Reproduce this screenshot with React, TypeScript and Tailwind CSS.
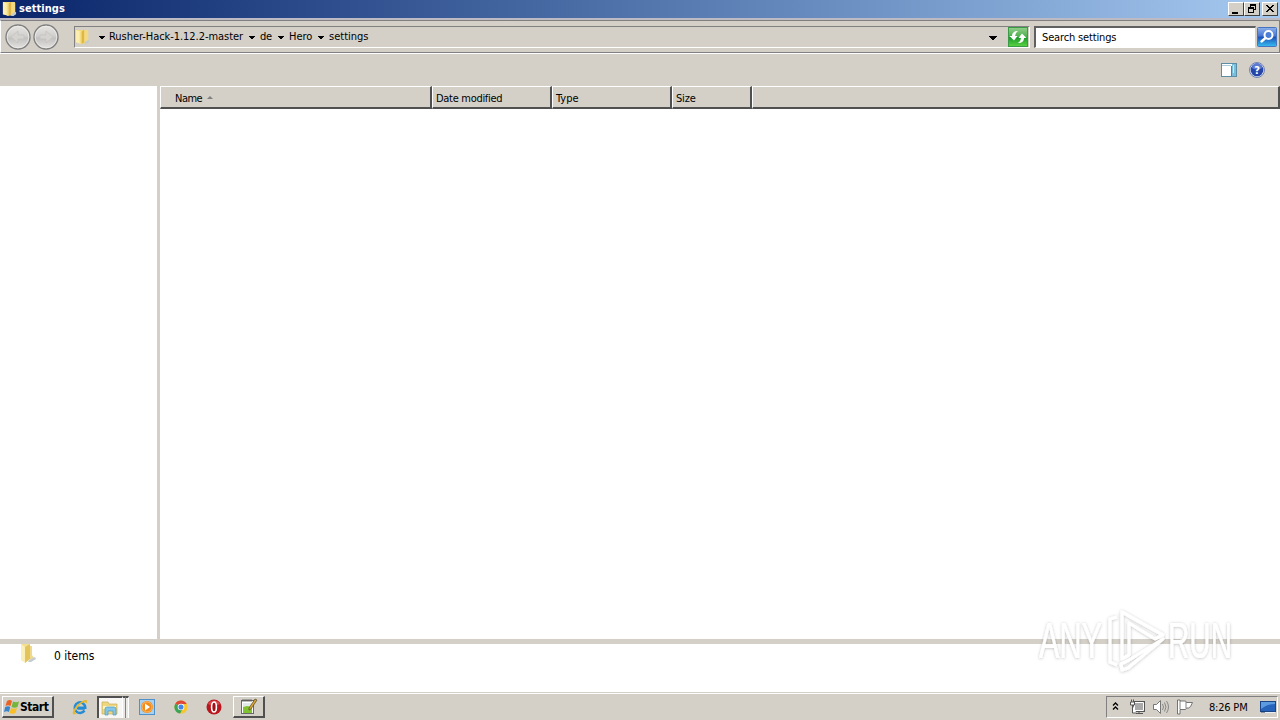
import React from "react";

function Folder({ className = "" }: { className?: string }) {
  return (
    <svg viewBox="0 0 16 18" preserveAspectRatio="none" className={className}>
      <path d="M1 1h12l1 1v12l-2 3-5-1-6-1z" fill="#f1d97e" />
      <path d="M1 1l6 2v14l-6-2z" fill="#fbeeb0" />
      <path d="M5 2l2 1v14l-2-1z" fill="#f4dc85" />
      <path d="M7 3l2-2h1v14l-3 2z" fill="#dfb744" />
      <path d="M10 1h3l1 1v10l-2 3h-2z" fill="#f3da82" />
      <path d="M11 14l4-2v3l-3 2h-2z" fill="#c3cccb" />
    </svg>
  );
}

function StatusFolder() {
  return (
    <svg viewBox="0 0 17 22" width="17" height="22" className="-mt-[1px] shrink-0">
      <path d="M1 1h9v15l-7 2-2-1z" fill="#f3df92" />
      <path d="M1 1l4 3v16l-4-3z" fill="#fbefb9" />
      <path d="M5 4l5-3v15l-5 4z" fill="#e3c35c" />
      <path d="M10 3h2v9l2 3-2 2-2-1z" fill="#efd98c" />
      <path d="M9 17l6-3 1 2-5 3H8z" fill="#c5ccd0" />
    </svg>
  );
}

function Down({ className = "" }: { className?: string }) {
  return (
    <svg viewBox="0 0 6 3" className={`h-[3px] w-[6px] shrink-0 ${className}`} shapeRendering="crispEdges">
      <path d="M0 0h6v1H5v1H4v1H2V2H1V1H0z" fill="#000" />
    </svg>
  );
}

function NavButton({ flip = false }: { flip?: boolean }) {
  return (
    <svg viewBox="0 0 26 26" width="26" height="26" className="shrink-0">
      <defs>
        <linearGradient id="orb" x1="0" y1="0" x2="0" y2="1">
          <stop offset="0" stopColor="#e8e6e3" />
          <stop offset=".45" stopColor="#d2d0ce" />
          <stop offset=".55" stopColor="#c3c1bf" />
          <stop offset="1" stopColor="#e6e4e2" />
        </linearGradient>
      </defs>
      <circle cx="13" cy="13" r="12" fill="url(#orb)" stroke="#7f7f7f" strokeWidth="1.4" />
      <circle cx="13" cy="13" r="10.8" fill="none" stroke="#efedeb" strokeWidth=".8" />
      <path
        d={flip ? "M7 11h6V7l7 6-7 6v-4H7z" : "M19 11h-6V7l-7 6 7 6v-4h6z"}
        fill="#d5d3d0"
        stroke="#c5c3c0"
        strokeWidth=".8"
      />
    </svg>
  );
}

function WinButton({ children }: { children: React.ReactNode }) {
  return (
    <div className="h-[14px] w-4 border border-t-white border-r-[#404040] border-b-[#404040] border-l-white bg-[#d4d0c8]">
      <svg viewBox="0 0 14 12" width="14" height="12" shapeRendering="crispEdges">
        {children}
      </svg>
    </div>
  );
}

function Column({ label, className }: { label: string; className: string }) {
  return (
    <div
      className={`h-[23px] shrink-0 border-t border-r-2 border-b-2 border-l border-t-white border-r-[#505050] border-b-[#505050] border-l-white bg-[#d4d0c8] pt-[5px] leading-[13px] ${className}`}
    >
      {label}
    </div>
  );
}

function TitleBar() {
  return (
    <div className="flex h-[18px] items-center bg-linear-to-r from-[#0a246a] to-[#a6caf0] pr-[2px] pl-[2px] text-white">
      <Folder className="h-4 w-[15px]" />
      <span className="-mt-[1px] ml-[2px] text-[11px] leading-[13px] font-bold tracking-[0.05px]">settings</span>
      <div className="ml-auto flex">
        <WinButton>
          <rect x="3" y="9" width="6" height="2" />
        </WinButton>
        <WinButton>
          <path d="M5 1h6v6H9V6h1V3H6v1H5z" />
          <path fillRule="evenodd" d="M3 4h6v6H3zM4 6v3h4V6z" />
        </WinButton>
        <div className="w-[2px]" />
        <WinButton>
          <path d="M3 2h2v1h1v1h2V3h1V2h2v1h-1v1H9v1H8v1h1v1h1v1h1v1H9V8H8V7H6v1H5v1H3V8h1V7h1V6h1V5H5V4H4V3H3z" />
        </WinButton>
      </div>
    </div>
  );
}

function AddressRow() {
  return (
    <div className="flex h-9 border-t-2 border-b border-t-[#bdbac4] border-b-white">
      <div className="flex w-full border-t border-r border-b border-l border-t-[#808080] border-r-[#808080] border-b-[#808080] border-l-white pl-[4px]">
        <div className="mt-[3px] flex h-[26px] w-[54px] shrink-0 gap-[2px]">
          <NavButton />
          <NavButton flip />
        </div>
        <div className="mt-[5px] ml-[15px] flex h-[22px] w-[956px] shrink-0 items-center border border-t-[#808080] border-r-white border-b-white border-l-[#808080]">
          <Folder className="h-4 w-[15px] shrink-0" />
          <Down className="ml-[9px]" />
          <span className="-mt-[2px] ml-[4px] w-[140px] shrink-0 tracking-[-0.05px]">Rusher-Hack-1.12.2-master</span>
          <Down />
          <span className="-mt-[2px] ml-[5px] w-[18px] shrink-0 tracking-[-0.3px]">de</span>
          <Down />
          <span className="-mt-[2px] ml-[5px] w-[28px] shrink-0">Hero</span>
          <Down className="ml-[1px]" />
          <span className="-mt-[2px] ml-[5px] shrink-0">settings</span>
          <svg viewBox="0 0 8 4" width="8" height="4" className="mt-[1px] mr-[11px] ml-auto shrink-0" shapeRendering="crispEdges">
            <path d="M0 0h8v1H7v1H6v1H5v1H3V3H2V2H1V1H0z" />
          </svg>
          <svg viewBox="0 0 20 20" width="20" height="20" className="mr-[1px] shrink-0">
            <defs>
              <linearGradient id="refresh" x1="0" y1="0" x2="0" y2="1">
                <stop offset="0" stopColor="#94cf8d" />
                <stop offset=".48" stopColor="#4caf4d" />
                <stop offset=".5" stopColor="#169529" />
                <stop offset="1" stopColor="#5bd443" />
              </linearGradient>
            </defs>
            <rect x=".5" y=".5" width="19" height="19" fill="url(#refresh)" stroke="#3a9a46" />
            <path d="M10 4C6 4 4 6 4 9H1.500L6 13.500 9.500 9H7q0-3 3-5z" fill="#fff" />
            <path d="M10 16c4 0 6-2 6-5h2.500L14 6.500 10.500 11H13q0 3-3 5z" fill="#fff" />
          </svg>
        </div>
        <div className="mt-[5px] ml-[4px] h-[22px] w-[222px] shrink-0 border-t-2 border-r border-b border-l-2 border-t-[#606060] border-r-[#d4d0c8] border-b-white border-l-[#606060] bg-white pt-[3px] pl-[6px] tracking-[-0.15px]">
          Search settings
        </div>
        <svg viewBox="0 0 20 20" width="20" height="20" className="mt-[6px] ml-[1px] shrink-0">
          <defs>
            <linearGradient id="find" x1="0" y1="0" x2="0" y2="1">
              <stop offset="0" stopColor="#8fb1ea" />
              <stop offset=".45" stopColor="#4775d2" />
              <stop offset=".5" stopColor="#1d50b8" />
              <stop offset="1" stopColor="#35bdf2" />
            </linearGradient>
          </defs>
          <rect x=".5" y=".5" width="19" height="19" rx="1" fill="url(#find)" stroke="#4675bd" />
          <circle cx="11.5" cy="8" r="4" fill="#4c80d8" stroke="#fff" strokeWidth="2" />
          <path d="M8.500 11L4.500 14.500" stroke="#fff" strokeWidth="2.400" strokeLinecap="round" />
        </svg>
      </div>
    </div>
  );
}

function ToolRow() {
  return (
    <div className="flex h-8 items-center justify-end pr-[15px]">
      <svg viewBox="0 0 16 14" width="16" height="14">
        <rect x=".5" y=".5" width="15" height="13" fill="#fff" stroke="#5d8ca5" />
        <path d="M1 2.500h9" stroke="#a9cbdc" />
        <rect x="11" y="1" width="4" height="12" fill="#79bedb" />
        <path d="M10.500 3v10" stroke="#4f829c" />
        <path d="M12.500 2v8" stroke="#c5e7f2" />
      </svg>
      <svg viewBox="0 0 16 16" width="16" height="16" className="ml-3">
        <circle cx="8" cy="8" r="7.500" fill="#d9e0f3" stroke="#7382b0" />
        <circle cx="8" cy="8" r="6.300" fill="#2546a8" />
        <path d="M3 6a5 5 0 0 1 10 0q-5 3-10 0z" fill="#5d7bd0" />
        <text x="8" y="12" textAnchor="middle" fontSize="11" fontWeight="bold" fill="#fff">?</text>
      </svg>
    </div>
  );
}

function Watermark() {
  return (
    <svg viewBox="0 0 240 80" width="240" height="80" className="pointer-events-none absolute top-[605px] left-[1030px]">
      <defs>
        <filter id="halo" x="-10%" y="-10%" width="120%" height="120%">
          <feDropShadow dx="0" dy="0.5" stdDeviation="1.6" floodColor="#000" floodOpacity=".26" />
        </filter>
      </defs>
      <g filter="url(#halo)" fill="#fff" stroke="#fff" fontFamily="Liberation Sans Narrow, Liberation Sans" fontSize="50">
        <text x="9" y="53" textLength="63" lengthAdjust="spacingAndGlyphs" strokeWidth=".2">ANY</text>
        <text x="138" y="53" textLength="64" lengthAdjust="spacingAndGlyphs" strokeWidth=".2">RUN</text>
        <g fill="none" strokeWidth="3.200" strokeLinejoin="round">
          <path d="M92 7v47l7-4V18l26 16 8-4z" />
          <path d="M87 12l-7 2v43l7 3" />
          <path d="M133 34L99 55l-8 4 1 6 6-2z" />
        </g>
      </g>
    </svg>
  );
}

function Taskbar() {
  return (
    <div className="flex h-7 border-t border-t-[#d4d0c8] bg-[#d4d0c8]">
      <div className="flex w-full items-start border-t border-white pt-[2px]">
        <div className="ml-[2px] flex h-[22px] w-[52px] items-center border-t border-r-2 border-b-2 border-l border-t-white border-r-[#505050] border-b-[#505050] border-l-white">
          <svg viewBox="0 0 16 16" width="16" height="16" className="ml-[1px] shrink-0">
            <path d="M3 2q3-2 5 0L6.500 7Q4 5.500 1.500 7z" fill="#ea6325" />
            <path d="M9 2.500q3 1.500 6 0L13.500 8q-3 1.500-6 0z" fill="#75b53b" />
            <path d="M1.200 8q3-1.500 5 0L5 13Q3 11.500 0 13z" fill="#3885cb" />
            <path d="M7 9q3 1.500 6 0l-1.500 5q-3 1.500-6 0z" fill="#f8bf27" />
          </svg>
          <b className="mt-[1px] text-[12px] tracking-[-0.45px]">Start</b>
        </div>
        <svg viewBox="0 0 16 16" width="16" height="16" className="mt-[3px] ml-[18px]">
          <path d="M12.800 9.500H5.500M12.500 11.500A5.300 5.300 0 1 1 13.300 8.800H5" fill="none" stroke="#258bd3" strokeWidth="2.500" />
          <path d="M1 15C-1 11 9 1 14 1c2 0 1 3 0 4 0-5-9 2-11 8-.5 2 2 1 3 .5-2 1.500-4 2.500-5 1.500z" fill="#e4b832" />
        </svg>
        <div className="ml-[9px] flex h-[22px] w-[25px] border-t-2 border-l-2 border-t-[#505050] border-l-[#505050] bg-[#f7f6f3] pt-[2px] pl-[2px]">
          <svg viewBox="0 0 18 16" width="18" height="16">
            <path d="M1 2h6l1 2h8v10H1z" fill="#eed77e" stroke="#c8ad58" strokeWidth=".7" />
            <path d="M2 6h13v3H2z" fill="#fff5c4" />
            <path d="M4 15V9q0-2 2-2h7q2 0 2 2v6h-3v-4H7v4z" fill="#83c6e8" stroke="#4f9ac5" strokeWidth=".7" />
          </svg>
        </div>
        <div className="h-[22px] w-1 border-t-2 border-r border-l border-t-[#505050] border-r-[#808080] border-l-white bg-[#e9e7e3]" />
        <div className="h-[22px] w-[3px] border-t-2 border-r border-t-[#505050] border-r-white bg-[#e9e7e3]" />
        <svg viewBox="0 0 16 16" width="16" height="16" className="mt-[3px] ml-[10px]">
          <rect x=".5" y=".5" width="15" height="15" fill="#a9d0ef" stroke="#4f91c8" />
          <circle cx="8" cy="8" r="6" fill="#f28b1c" />
          <circle cx="8" cy="8" r="5" fill="none" stroke="#f9b85c" />
          <path d="M6 4.500v7l5-3.500z" fill="#fff" />
        </svg>
        <svg viewBox="0 0 16 16" width="14" height="14" className="mt-[4px] ml-[19px]">
          <circle cx="8" cy="8" r="7.500" fill="#f9c52c" />
          <path d="M8 8L1.500 4.200A7.500 7.500 0 0 1 14.500 4.500H8z" fill="#df4738" />
          <path d="M8 8L1.500 4.200A7.500 7.500 0 0 0 7 15.500L10 10z" fill="#3ca456" />
          <circle cx="8" cy="8" r="3.800" fill="#fff" />
          <circle cx="8" cy="8" r="2.900" fill="#4385e8" />
        </svg>
        <svg viewBox="0 0 16 16" width="16" height="16" className="mt-[3px] ml-[18px]">
          <circle cx="8" cy="8" r="7.500" fill="#b9161d" />
          <path d="M2 5a7 7 0 0 1 12 0q-6 3-12 0z" fill="#d9474c" />
          <ellipse cx="8" cy="8" rx="2.400" ry="5" fill="#a01016" stroke="#fff" strokeWidth="1.600" />
        </svg>
        <div className="ml-[11px] h-[22px] w-[32px] border-t border-r-2 border-b-2 border-l border-t-white border-r-[#505050] border-b-[#505050] border-l-white pt-[1px] pl-[6px]">
          <svg viewBox="0 0 18 17" width="18" height="17">
            <rect x="1.500" y="2.500" width="12" height="13" fill="#fff" stroke="#686868" />
            <path d="M3 1v3M5 1v3M7 1v3M9 1v3M11 1v3" stroke="#555" strokeWidth=".8" />
            <path d="M3 6h9M3 8h8" stroke="#b8c5cc" strokeWidth=".8" />
            <path d="M3 9l4-1 5 1v6H3z" fill="#80c22f" />
            <path d="M15 1l2 1-6 9-2 1v-2z" fill="#dba531" stroke="#554322" strokeWidth=".7" />
          </svg>
        </div>
        <div className="mr-[2px] ml-auto flex h-[22px] w-[172px] items-center border border-t-[#808080] border-r-white border-b-white border-l-[#808080]">
          <svg viewBox="0 0 7 9" width="7" height="9" className="-mt-[2px] ml-[5px]">
            <path d="M1 3.500l2.500-2.500L6 3.500M1 7.500L3.500 5 6 7.500" stroke="#000" strokeWidth="1.300" fill="none" />
          </svg>
          <svg viewBox="0 0 16 16" width="16" height="16" className="ml-[10px]">
            <path d="M5.500 3.500h9v8h-9z" fill="#aaa" stroke="#555" strokeWidth="3" />
            <path d="M5.500 3.500h9v8h-9z" fill="#aaa" stroke="#fff" />
            <path d="M7 14.500h7M10 12v2" stroke="#555" />
            <path d="M1.500 3v3h4V3zM2.500 3V.5M4.500 3V.5M3.500 6v8h4" fill="#fff" stroke="#555" />
          </svg>
          <svg viewBox="0 0 16 16" width="16" height="16" className="ml-2" fill="none" stroke="#777">
            <path d="M.5 5.500h3l4-4v13l-4-4h-3z" fill="#fff" />
            <path d="M9.500 5q2 3 0 6M11.500 3.500q3 4.500 0 9M13.500 2q4 6 0 12" stroke="#888" />
          </svg>
          <svg viewBox="0 0 16 16" width="16" height="16" className="ml-2" fill="#fff" stroke="#666">
            <path d="M.5 1v14H3V10.500h5.500l1-1.500h2q2 0 4-5.500H9.500L8.500 2H3V1z" strokeWidth=".9" />
            <path d="M3 2v8M9 3v6" strokeWidth=".8" />
          </svg>
          <span className="ml-4 w-[50px] tracking-[-0.2px] whitespace-nowrap">8:26 PM</span>
          <svg viewBox="0 0 16 14" width="16" height="14" className="ml-[1px] shrink-0">
            <rect x=".5" y="1.500" width="15" height="10" fill="#2664bb" stroke="#1b4587" />
            <path d="M1 2h14v2Q7 4 1 9z" fill="#5d9be0" />
            <path d="M1 12.500h14" stroke="#e8eef3" />
            <path d="M1 12h4" stroke="#163860" />
          </svg>
        </div>
      </div>
    </div>
  );
}

export default function App() {
  return (
    <div className="relative flex h-[720px] w-[1280px] flex-col overflow-hidden bg-[#d4d0c8] font-['DejaVu_Sans_Condensed','DejaVu_Sans',sans-serif] text-[11px] leading-[13px] text-black [font-stretch:condensed]">
      <TitleBar />
      <AddressRow />
      <ToolRow />
      <div className="flex h-[553px]">
        <div className="w-[157px] bg-white" />
        <div className="w-[3px] bg-[#d4d0c8]" />
        <div className="flex flex-1 flex-col bg-white">
          <div className="flex">
            <div className="flex h-[23px] w-[272px] items-start border-t border-r-2 border-b-2 border-l border-t-white border-r-[#505050] border-b-[#505050] border-l-white bg-[#d4d0c8] pt-[5px] pl-[14px]">
              <span className="w-[32px] tracking-[-0.5px]">Name</span>
              <svg viewBox="0 0 6 3" width="6" height="3" className="mt-[4px]">
                <path d="M0 3l3-3 3 3z" fill="#808080" />
              </svg>
            </div>
            <Column label="Date modified" className="w-[120px] pl-[3px] tracking-[-0.3px]" />
            <Column label="Type" className="w-[120px] pl-[3px]" />
            <Column label="Size" className="w-[80px] pl-[3px] tracking-[-0.2px]" />
            <Column label="" className="w-[528px]" />
          </div>
        </div>
      </div>
      <div className="h-[5px] bg-[#d4d0c8]" />
      <div className="flex h-[48px] bg-white pl-5">
        <StatusFolder />
        <span className="mt-[5px] ml-[17px] text-[12px] leading-[14px]">0 items</span>
      </div>
      <Taskbar />
      <Watermark />
    </div>
  );
}
